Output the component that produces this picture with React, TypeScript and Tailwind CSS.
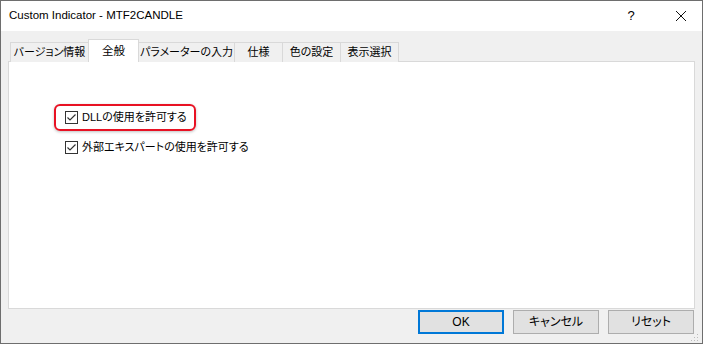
import React from 'react';

const font = "font-['Liberation_Sans','Noto_Sans_CJK_JP',sans-serif] [font-feature-settings:'palt']";

function CheckBox() {
  return (
    <svg width="13" height="13" viewBox="0 0 13 13" className="shrink-0">
      <rect x="0.5" y="0.5" width="12" height="12" fill="#fff" stroke="#333" />
      <path d="M2.5 6.5 L5 9 L10.5 3.5" fill="none" stroke="#333" strokeWidth="1.2" />
    </svg>
  );
}

function Tab({ label, w, border }: { label: string; w: string; border: string }) {
  return (
    <div className={`${w} ${border} shrink-0 whitespace-nowrap h-[20px] flex items-center justify-center border-[#d9d9d9] bg-[#f0f0f0] text-[11px] text-black`}>
      {label}
    </div>
  );
}

function Button({ label, primary }: { label: string; primary?: boolean }) {
  return (
    <button
      className={`w-[86px] h-[24px] flex items-center justify-center bg-[#e1e1e1] text-[12px] text-black whitespace-nowrap ${
        primary ? 'border-2 border-[#0078d7]' : 'border border-[#adadad]'
      }`}
    >
      {label}
    </button>
  );
}

export default function App() {
  return (
    <div className={`w-[703px] h-[344px] border border-[#6e6e6e] bg-[#f0f0f0] flex flex-col ${font}`}>
      {/* title bar */}
      <div className="h-[30px] bg-white flex items-center pl-2 text-[11.5px] text-black">
        <span className="flex-1">Custom Indicator - MTF2CANDLE</span>
        <span className="w-[12px] text-center text-[13px] mr-[38px]">?</span>
        <svg width="12" height="12" viewBox="0 0 12 12" className="mr-[15px]">
          <path d="M1 1 L11 11 M11 1 L1 11" stroke="#111" strokeWidth="1" />
        </svg>
      </div>

      <div className="flex flex-col pt-[8px] px-[7px]">
        {/* tabs */}
        <div className="flex items-end pl-[2px] relative z-10 -mb-px">
          <Tab label="バージョン情報" w="w-[78px]" border="border-l border-t" />
          <div className="w-[51px] shrink-0 h-[23px] flex items-start pt-[3px] justify-center border-l border-t border-r border-[#d9d9d9] bg-white text-[11.5px] text-black">
            全般
          </div>
          <Tab label="パラメーターの入力" w="w-[95px]" border="border-t" />
          <Tab label="仕様" w="w-[48px]" border="border-l border-t" />
          <Tab label="色の設定" w="w-[58px]" border="border-l border-t" />
          <Tab label="表示選択" w="w-[59px]" border="border-l border-t border-r" />
        </div>

        {/* panel */}
        <div className="h-[248px] border border-[#d9d9d9] bg-white pl-[45px] pt-[42px] flex flex-col items-start text-[11px] text-black">
          <div className="h-[27px] flex items-center gap-[4px] pl-[9px] pr-[7px] border-2 border-[#e81123] rounded-[6px] shadow-[0_1px_3px_rgba(0,0,0,0.25)] whitespace-nowrap">
            <CheckBox />
            <span>DLLの使用を許可する</span>
          </div>
          <div className="mt-[7px] h-[18px] flex items-center gap-[4px] pl-[11px] whitespace-nowrap">
            <CheckBox />
            <span>外部エキスパートの使用を許可する</span>
          </div>
        </div>

        {/* buttons */}
        <div className="flex justify-end items-start mt-[1px] pr-[2px] h-[33px]">
          <div className="flex gap-[9px]">
            <Button label="OK" primary />
            <Button label="キャンセル" />
            <Button label="リセット" />
          </div>
          <svg width="8" height="8" viewBox="0 0 8 8" className="self-end mb-[1px] -mr-[6px] ml-[-3px]">
            <rect x="6" y="0" width="1" height="1" fill="#bbb" />
            <rect x="3" y="3" width="1" height="1" fill="#bbb" />
            <rect x="6" y="3" width="1" height="1" fill="#bbb" />
            <rect x="0" y="6" width="1" height="1" fill="#bbb" />
            <rect x="3" y="6" width="1" height="1" fill="#bbb" />
            <rect x="6" y="6" width="1" height="1" fill="#bbb" />
          </svg>
        </div>
      </div>
    </div>
  );
}
